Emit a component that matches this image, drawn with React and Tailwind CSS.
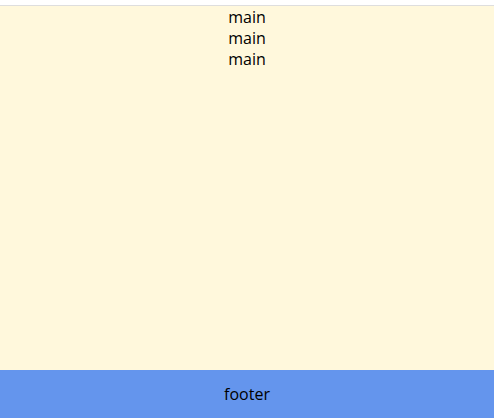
import React from 'react';

export default function App() {
    return (
        <div className="flex h-screen flex-col bg-white font-['Open_Sans',sans-serif] text-base text-black">
            {/* thin header strip */}
            <div className="h-[6px] shrink-0 border-b border-[#dedede] bg-white" />

            <main className="flex-1 bg-[#fff8dc] pt-px text-center leading-[21px]">
                <div>main</div>
                <div>main</div>
                <div>main</div>
            </main>

            <footer className="flex h-12 shrink-0 items-center justify-center bg-[#6495ed]">
                footer
            </footer>
        </div>
    );
}
